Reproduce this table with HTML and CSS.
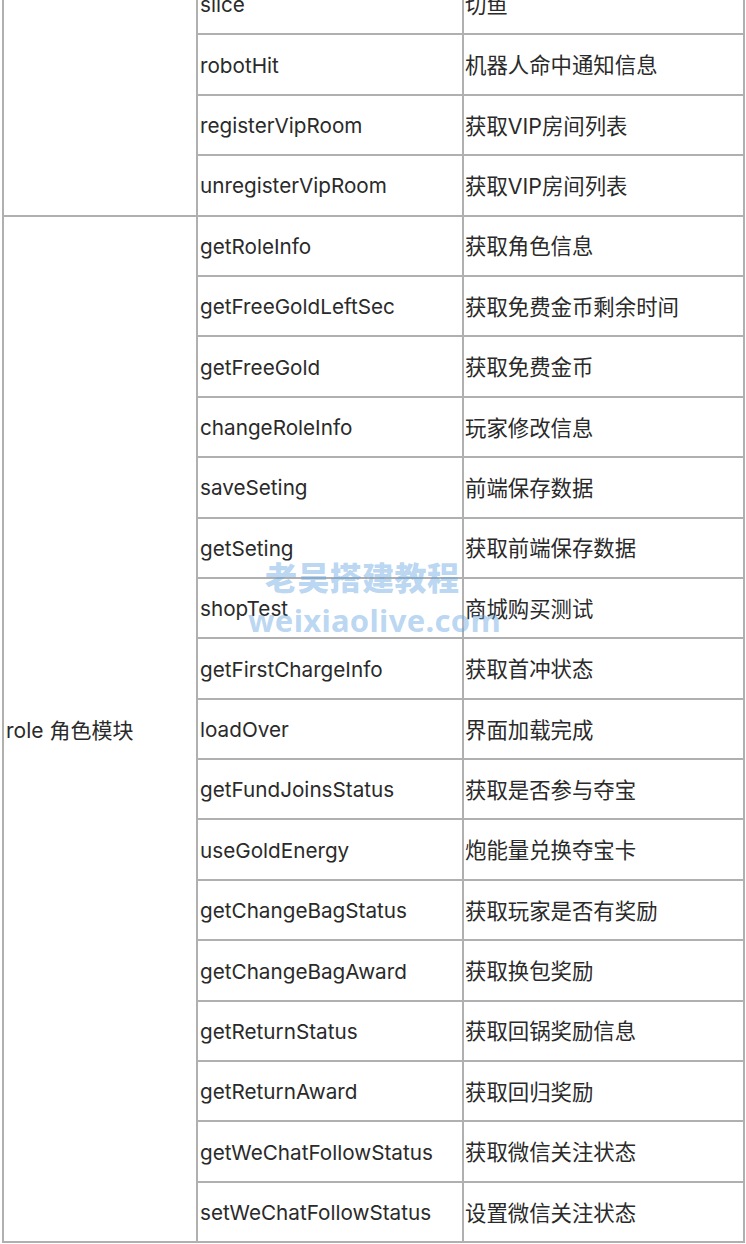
FILE: index.html
```html
<!DOCTYPE html>
<html lang="zh-CN">
<head>
<meta charset="utf-8">
<title>role 角色模块</title>
<link rel="stylesheet" href="styles.css">
</head>
<body>
<div class="page">
<table class="api-table">
  <colgroup>
    <col class="c1"><col class="c2"><col class="c3">
  </colgroup>
  <tbody>
    <tr><td rowspan="4"></td><td class="api">slice</td><td class="desc">切鱼</td></tr>
    <tr><td class="api">robotHit</td><td class="desc">机器人命中通知信息</td></tr>
    <tr><td class="api">registerVipRoom</td><td class="desc">获取VIP房间列表</td></tr>
    <tr><td class="api">unregisterVipRoom</td><td class="desc">获取VIP房间列表</td></tr>
    <tr><td rowspan="17">role 角色模块</td><td class="api">getRoleInfo</td><td class="desc">获取角色信息</td></tr>
    <tr><td class="api">getFreeGoldLeftSec</td><td class="desc">获取免费金币剩余时间</td></tr>
    <tr><td class="api">getFreeGold</td><td class="desc">获取免费金币</td></tr>
    <tr><td class="api">changeRoleInfo</td><td class="desc">玩家修改信息</td></tr>
    <tr><td class="api">saveSeting</td><td class="desc">前端保存数据</td></tr>
    <tr><td class="api">getSeting</td><td class="desc">获取前端保存数据</td></tr>
    <tr><td class="api">shopTest</td><td class="desc">商城购买测试</td></tr>
    <tr><td class="api">getFirstChargeInfo</td><td class="desc">获取首冲状态</td></tr>
    <tr><td class="api">loadOver</td><td class="desc">界面加载完成</td></tr>
    <tr><td class="api">getFundJoinsStatus</td><td class="desc">获取是否参与夺宝</td></tr>
    <tr><td class="api">useGoldEnergy</td><td class="desc">炮能量兑换夺宝卡</td></tr>
    <tr><td class="api">getChangeBagStatus</td><td class="desc">获取玩家是否有奖励</td></tr>
    <tr><td class="api">getChangeBagAward</td><td class="desc">获取换包奖励</td></tr>
    <tr><td class="api">getReturnStatus</td><td class="desc">获取回锅奖励信息</td></tr>
    <tr><td class="api">getReturnAward</td><td class="desc">获取回归奖励</td></tr>
    <tr><td class="api">getWeChatFollowStatus</td><td class="desc">获取微信关注状态</td></tr>
    <tr><td class="api">setWeChatFollowStatus</td><td class="desc">设置微信关注状态</td></tr>
  </tbody>
</table>
<div class="wm-cn">老吴搭建教程</div>
<div class="wm-en">weixiaolive.com</div>
</div>
</body>
</html>
```

FILE: styles.css
```css
html, body {
  margin: 0;
  padding: 0;
  background: #ffffff;
}
.page {
  position: relative;
  width: 746px;
  height: 1244px;
  overflow: hidden;
}
.api-table {
  border-collapse: collapse;
  margin: -27px 0 0 2px;
  width: 741px;
  table-layout: fixed;
  font-family: Inter, "Noto Sans CJK SC", sans-serif;
  font-size: 21px;
  color: #2a2a2a;
}
.c1 { width: 194px; }
.c2 { width: 266px; }
.c3 { width: 281px; }
.api-table tr {
  height: 60.4px;
}
.api-table td {
  border: 2px solid #b0b0b0;
  padding: 3px 1px 0 2px;
  vertical-align: middle;
  white-space: nowrap;
  line-height: 1.2;
}
.api-table td.api {
  font-size: 20.7px;
}
.api-table td.desc {
  font-size: 21.4px;
  padding-left: 1px;
}
.wm-cn,
.wm-en {
  position: absolute;
  color: rgba(100, 165, 225, 0.45);
  font-weight: 700;
  white-space: nowrap;
  pointer-events: none;
}
.wm-cn {
  left: 265px;
  top: 556px;
  font-family: "Noto Sans CJK SC", sans-serif;
  font-size: 32px;
  letter-spacing: 0.4px;
  line-height: 40px;
  font-weight: 900;
}
.wm-en {
  left: 248px;
  top: 598px;
  font-family: "Noto Sans", sans-serif;
  font-size: 31px;
  line-height: 44px;
  letter-spacing: 0.3px;
}
```
